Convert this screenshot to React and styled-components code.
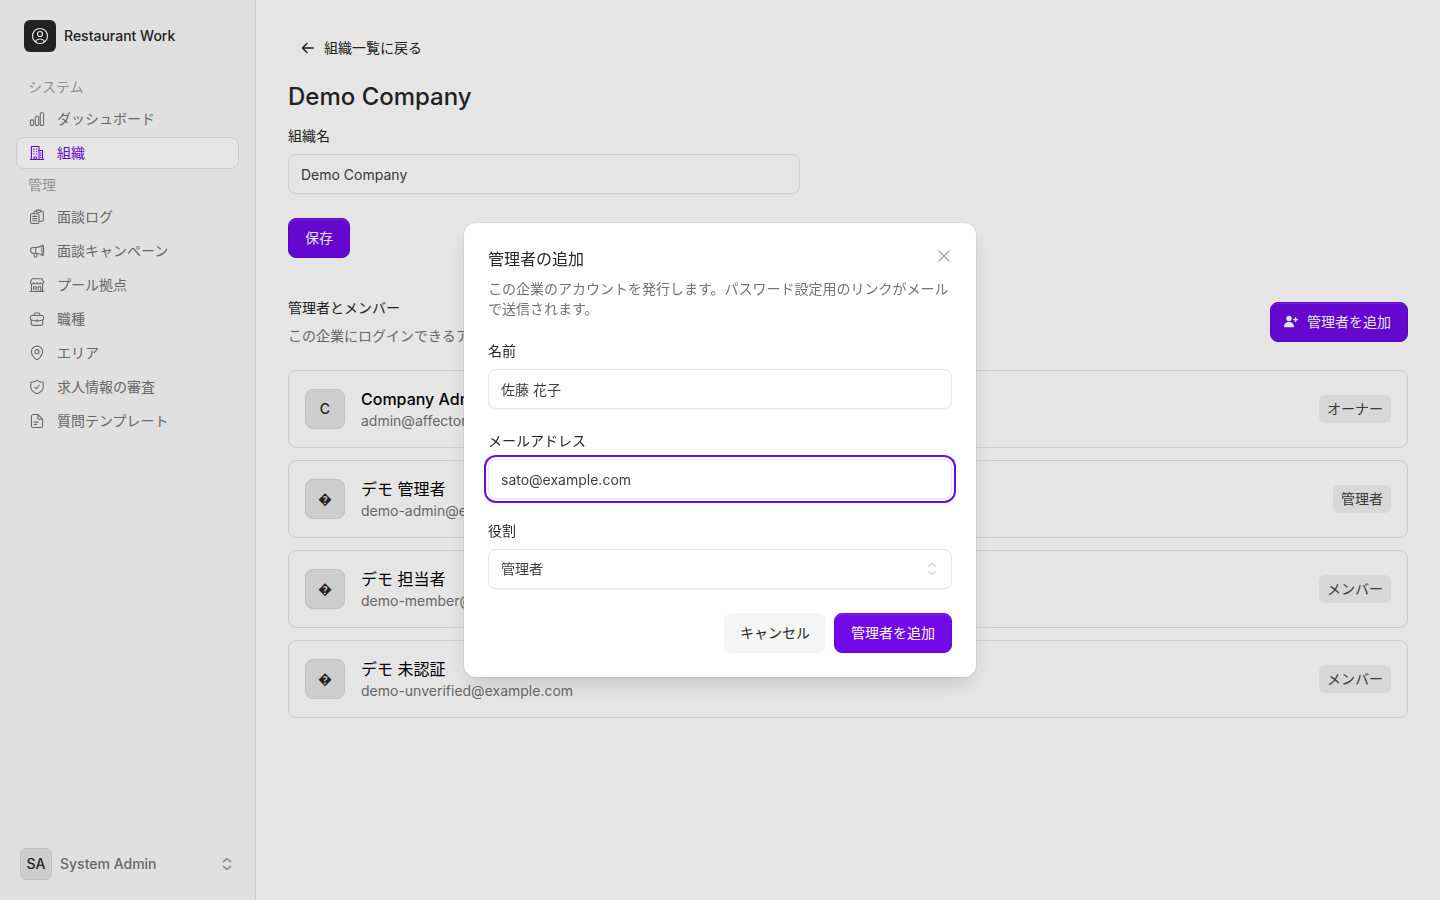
import * as React from 'react'
import styled, { createGlobalStyle } from 'styled-components'

const GlobalStyle = createGlobalStyle`
*, *::before, *::after {box-sizing:border-box;}
body {margin:0; background:#fff; color:#262626; font:400 14px/20px Inter, "Noto Sans CJK JP", sans-serif; -webkit-font-smoothing:antialiased;}
h1, h2, p, ul {margin:0; padding:0;}
ul {list-style:none;}
a {color:inherit; text-decoration:none;}
button, input, select {font:inherit; color:inherit;}
button {cursor:pointer;}
`;

const Page = styled.div`
display:flex;
min-height:100vh;
`;

const Sidebar = styled.aside`
display:flex;
flex-direction:column;
width:256px;
flex-shrink:0;
padding:20px 16px;
background:#fafafa;
border-right:1px solid #e3e3e3;
`;

const Brand = styled.a`
display:flex;
align-items:center;
gap:8px;
padding:0 8px;
margin-bottom:19px;
font-weight:500;
`;

const BrandMark = styled.span`
display:grid;
place-items:center;
width:32px;
height:32px;
border-radius:6px;
background:#262626;
color:#fff;
`;

const Nav = styled.nav`
flex:1;
h2 {padding:0 12px; color:#a3a3a3; font-size:14px; font-weight:400; line-height:32px;}
ul {display:flex; flex-direction:column; gap:2px;}
`;

const NavLink = styled.a`
display:flex;
align-items:center;
gap:12px;
height:32px;
padding:0 12px;
border:1px solid ${p => p.$active ? '#e3e3e3' : 'transparent'};
border-radius:8px;
background:${p => p.$active ? '#fff' : 'transparent'};
color:${p => p.$active ? '#7008e7' : '#737373'};
`;

const UserButton = styled.button`
display:flex;
align-items:center;
gap:8px;
padding:0 4px;
border:0;
background:none;
color:#737373;
font-weight:500;
text-align:left;
span:nth-child(2) {flex:1;}
svg {color:#999;}
`;

const Avatar = styled.span`
display:grid;
place-items:center;
flex-shrink:0;
width:${p => p.$size}px;
height:${p => p.$size}px;
border:1px solid #d6d6d6;
border-radius:${p => p.$size > 32 ? 8 : 6}px;
background:#e5e5e5;
color:#262626;
font-weight:500;
`;

const Main = styled.main`
flex:1;
min-width:0;
padding:32px;
`;

const BackLink = styled.a`
display:inline-flex;
align-items:center;
gap:8px;
height:32px;
padding:0 12px;
`;

const Title = styled.h1`
margin:16px 0 12px;
font-size:24px;
font-weight:500;
line-height:34px;
`;

const Field = styled.div`
display:flex;
flex-direction:column;
gap:8px;
max-width:512px;
`;

const control = `
width:100%;
height:40px;
padding:0 12px;
border:1px solid #e5e5e5;
border-radius:8px;
background:#fff;
box-shadow:0 1px 1px rgba(0,0,0,.04);
color:#404040;
`;

const Input = styled.input`
${control}
&:focus {outline:2px solid #7008e7; outline-offset:2px;}
`;

const SelectBox = styled.div`
display:grid;
align-items:center;
select {${control} appearance:none;}
select, svg {grid-area:1 / 1;}
svg {justify-self:end; margin-right:12px; color:#d4d4d4; pointer-events:none;}
`;

const Button = styled.button`
display:inline-flex;
align-items:center;
justify-content:center;
gap:8px;
height:40px;
padding:0 16px 0 ${p => p.$icon ? 12 : 16}px;
border:${p => p.$plain ? '0' : '1px solid #6805dc'};
border-radius:8px;
background:${p => p.$plain ? '#f5f5f5' : '#7008e7'};
box-shadow:${p => p.$plain ? 'none' : 'inset 0 1px 0 rgba(255,255,255,.15)'};
color:${p => p.$plain ? '#262626' : '#fff'};
`;

const OrgForm = styled.form`
display:flex;
flex-direction:column;
align-items:flex-start;
gap:24px;
${Field} {width:100%;}
`;

const SectionHead = styled.div`
display:flex;
align-items:center;
justify-content:space-between;
margin:40px 0 24px;
h2 {margin-bottom:8px; font-size:14px; font-weight:400; line-height:20px;}
p {color:#737373;}
`;

const MemberList = styled.ul`
display:flex;
flex-direction:column;
gap:12px;
`;

const Member = styled.li`
display:flex;
align-items:center;
gap:16px;
height:78px;
padding:0 16px;
border:1px solid #e3e3e3;
border-radius:8px;
`;

const MemberText = styled.div`
flex:1;
strong {display:block; color:#000; font-size:16px; font-weight:500; line-height:24px;}
strong:lang(ja) {font-weight:400;}
span {color:#737373;}
`;

const Badge = styled.span`
padding:4px 8px;
border-radius:6px;
background:#f0f0f0;
color:#404040;
`;

const Overlay = styled.div`
position:fixed;
inset:0;
display:grid;
place-items:center;
background:rgba(0,0,0,.1);
`;

const Dialog = styled.section`
width:100%;
max-width:512px;
padding:24px;
border-radius:12px;
background:#fff;
box-shadow:0 0 0 1px rgba(0,0,0,.05), 0 10px 20px -3px rgba(0,0,0,.14);
form {display:flex; flex-direction:column; gap:22px; margin-top:22px;}
`;

const DialogHead = styled.header`
display:flex;
justify-content:space-between;
margin-bottom:8px;
h2 {font-size:16px; font-weight:400; line-height:24px;}
& + p {color:#737373;}
`;

const CloseButton = styled.button`
display:grid;
place-items:center;
width:16px;
height:18px;
padding:0;
border:0;
background:none;
color:#a3a3a3;
`;

const Actions = styled.div`
display:flex;
justify-content:flex-end;
gap:8px;
padding-top:2px;
`;

const Icon = ({ size = 16, width = 1.2, children }) => (
    <svg width={size} height={size} viewBox="0 0 18 18" fill="none" stroke="currentColor" strokeWidth={width} strokeLinecap="round" strokeLinejoin="round" aria-hidden="true">
        {children}
    </svg>
)

const Chevrons = ({ width = 1.8 }) => (
    <Icon width={width}><path d="M5 6.300 9 2.800l4 3.500M5 11.700l4 3.500 4-3.500" /></Icon>
)

const icons = {
    chart: <><rect x="1.5" y="10" width="3.8" height="6.2" rx="1.2" /><rect x="7.1" y="6" width="3.8" height="10.2" rx="1.2" /><rect x="12.7" y="2" width="3.8" height="14.2" rx="1.2" /></>,
    building: <><path d="M1.5 16.25h15M2.75 16V1.75h8.5V16M11.25 6.25h4V16M5.75 16v-2.5h2.5V16" /><path d="M5.5 4.75h.01M8.5 4.75h.01M5.5 7.5h.01M8.5 7.5h.01M5.5 10.25h.01M8.5 10.25h.01M13.25 9h.01M13.25 11.5h.01M13.25 14h.01" strokeWidth="1.5" /></>,
    logs: <><rect x="1.75" y="5.25" width="9.5" height="11" rx="1.7" /><path d="M5.5 5V4.2c0-1.1.8-1.900 1.900-1.900H8M13.500 2.300h.8c1.100 0 1.900.8 1.900 1.900v7.800c0 1-.8 1.800-1.900 1.800h-3" /><rect x="8.300" y="1.250" width="5" height="2.500" rx="1" /><path d="M4.3 8.3h4.400M4.300 10.800h4.400M4.300 13.300h4.400" /></>,
    megaphone: <><path d="M15.500 2.500c-2.700 1.700-5.300 2.500-8 2.500H5a3.250 3.250 0 0 0 0 6.500h2.500c2.700 0 5.300.8 8 2.500M7.500 5v6.500M5.250 11.500l.9 3.600c.4 1.600 2.900 1.200 2.700-.5l-.35-3" /><ellipse cx="15.500" cy="8.250" rx="1" ry="5.750" /></>,
    store: <path d="M2.75 8.500V16.250M15.250 8.500V16.250M1.250 16.250h15.500M3.500 2h11l2 3.800c0 1.300-.9 2-1.900 2s-1.900-.7-1.900-1.700c0 1-.8 1.700-1.800 1.700S9 7.100 9 6.100c0 1-.9 1.700-1.900 1.700s-1.800-.7-1.800-1.700c0 1-.9 1.700-1.900 1.700s-1.900-.7-1.900-2ZM10.250 16v-5h3v5M5 11h3v2.750H5Z" />,
    briefcase: <><path d="M5.750 5V4c0-1 .7-1.700 1.700-1.700h3.100c1 0 1.700.7 1.700 1.700v1" /><path d="M3.500 5h11c1.100 0 2 .9 2 2v1.200c0 .9-.6 1.600-1.400 1.900C11 11.500 7 11.500 2.900 10.100 2.100 9.800 1.500 9.100 1.500 8.200V7c0-1.100.9-2 2-2Z" /><path d="M2.500 10.200v4c0 1.100.9 2 2 2h9c1.100 0 2-.9 2-2v-4M9 10v2" /></>,
    pin: <><path d="M15.250 7.500c0 3.500-3.600 7.200-5.300 8.600-.6.500-1.300.5-1.900 0C6.350 14.700 2.750 11 2.750 7.500a6.250 6.250 0 0 1 12.500 0Z" /><circle cx="9" cy="7.500" r="2.300" /></>,
    shield: <><path d="M9 1.500c2.200 1.500 4.400 2.100 7 2.100v5.200c0 4.200-3.600 6.600-7 7.700-3.400-1.100-7-3.500-7-7.700V3.600c2.600 0 4.800-.6 7-2.100Z" /><path d="m6.500 9.300 1.800 1.700 3.300-4" /></>,
    file: <><path d="M10 1.750H4.750c-1.100 0-2 .9-2 2v10.500c0 1.100.9 2 2 2h8.500c1.100 0 2-.9 2-2V7Z" /><path d="M10 2v4c0 .6.400 1 1 1h4M5.750 10.250h4.500M5.750 13h3" /></>,
}

const systemLinks = [
    { label: 'ダッシュボード', icon: 'chart' },
    { label: '組織', icon: 'building', active: true },
]

const manageLinks = [
    { label: '面談ログ', icon: 'logs' },
    { label: '面談キャンペーン', icon: 'megaphone' },
    { label: 'プール拠点', icon: 'store' },
    { label: '職種', icon: 'briefcase' },
    { label: 'エリア', icon: 'pin' },
    { label: '求人情報の審査', icon: 'shield' },
    { label: '質問テンプレート', icon: 'file' },
]

const members = [
    { initial: 'C', name: 'Company Admin', lang: 'en', email: 'admin@affector.com', role: 'オーナー' },
    { initial: '\uFFFD', name: 'デモ 管理者', lang: 'ja', email: 'demo-admin@example.com', role: '管理者' },
    { initial: '\uFFFD', name: 'デモ 担当者', lang: 'ja', email: 'demo-member@example.com', role: 'メンバー' },
    { initial: '\uFFFD', name: 'デモ 未認証', lang: 'ja', email: 'demo-unverified@example.com', role: 'メンバー' },
]

const NavList = ({ title, links }) => (
    <>
        <h2>{title}</h2>
        <ul>
            {links.map(link => (
                <li key={link.label}>
                    <NavLink href="#" $active={link.active}>
                        <Icon>{icons[link.icon]}</Icon>
                        {link.label}
                    </NavLink>
                </li>
            ))}
        </ul>
    </>
)

const App = () => {

    return (
        <>
            <GlobalStyle />
            <Page>
                <Sidebar>
                    <Brand href="#">
                        <BrandMark>
                            <Icon size={18}><circle cx="9" cy="9" r="7.5" /><circle cx="9" cy="7" r="2.5" /><path d="M4.500 14.700c.7-1.800 2.400-2.700 4.500-2.700s3.800.9 4.500 2.700" /></Icon>
                        </BrandMark>
                        Restaurant Work
                    </Brand>
                    <Nav>
                        <NavList title="システム" links={systemLinks} />
                        <NavList title="管理" links={manageLinks} />
                    </Nav>
                    <UserButton type="button">
                        <Avatar $size={32}>SA</Avatar>
                        <span>System Admin</span>
                        <Chevrons />
                    </UserButton>
                </Sidebar>
                <Main>
                    <BackLink href="#">
                        <Icon width={1.7}><path d="M15 9H3M7.800 4 2.800 9l5 5" /></Icon>
                        組織一覧に戻る
                    </BackLink>
                    <Title>Demo Company</Title>
                    <OrgForm onSubmit={e => e.preventDefault()}>
                        <Field>
                            <label htmlFor="org">組織名</label>
                            <Input id="org" defaultValue="Demo Company" />
                        </Field>
                        <Button>保存</Button>
                    </OrgForm>
                    <SectionHead>
                        <div>
                            <h2>管理者とメンバー</h2>
                            <p>この企業にログインできるアカウントです。</p>
                        </div>
                        <Button type="button" $icon>
                            <svg width="16" height="16" viewBox="0 0 16 16" fill="currentColor" aria-hidden="true">
                                <circle cx="6" cy="4.500" r="2.700" />
                                <path d="M1 12.700C1 9.800 3.200 8 6 8s5 1.800 5 4.700c0 .3-.2.500-.5.500h-9c-.3 0-.5-.2-.5-.5ZM11.900 3.200h1.400v1.700H15v1.400h-1.700V8h-1.400V6.300h-1.700V4.900h1.700Z" />
                            </svg>
                            管理者を追加
                        </Button>
                    </SectionHead>
                    <MemberList>
                        {members.map(m => (
                            <Member key={m.name}>
                                <Avatar $size={40}>{m.initial}</Avatar>
                                <MemberText>
                                    <strong lang={m.lang}>{m.name}</strong>
                                    <span>{m.email}</span>
                                </MemberText>
                                <Badge>{m.role}</Badge>
                            </Member>
                        ))}
                    </MemberList>
                </Main>
            </Page>
            <Overlay>
                <Dialog role="dialog" aria-modal="true" aria-labelledby="dialog-title">
                    <DialogHead>
                        <h2 id="dialog-title">管理者の追加</h2>
                        <CloseButton type="button" aria-label="閉じる">
                            <Icon width={1.5}><path d="m3.500 3.500 11 11m0-11-11 11" /></Icon>
                        </CloseButton>
                    </DialogHead>
                    <p>この企業のアカウントを発行します。パスワード設定用のリンクがメールで送信されます。</p>
                    <form onSubmit={e => e.preventDefault()}>
                        <Field>
                            <label htmlFor="name">名前</label>
                            <Input id="name" defaultValue="佐藤 花子" />
                        </Field>
                        <Field>
                            <label htmlFor="email">メールアドレス</label>
                            <Input id="email" type="email" defaultValue="sato@example.com" autoFocus />
                        </Field>
                        <Field>
                            <label htmlFor="role">役割</label>
                            <SelectBox>
                                <select id="role" defaultValue="管理者">
                                    <option>管理者</option>
                                    <option>メンバー</option>
                                </select>
                                <Chevrons width={1.5} />
                            </SelectBox>
                        </Field>
                        <Actions>
                            <Button type="button" $plain>キャンセル</Button>
                            <Button>管理者を追加</Button>
                        </Actions>
                    </form>
                </Dialog>
            </Overlay>
        </>
    )
}

export default App
